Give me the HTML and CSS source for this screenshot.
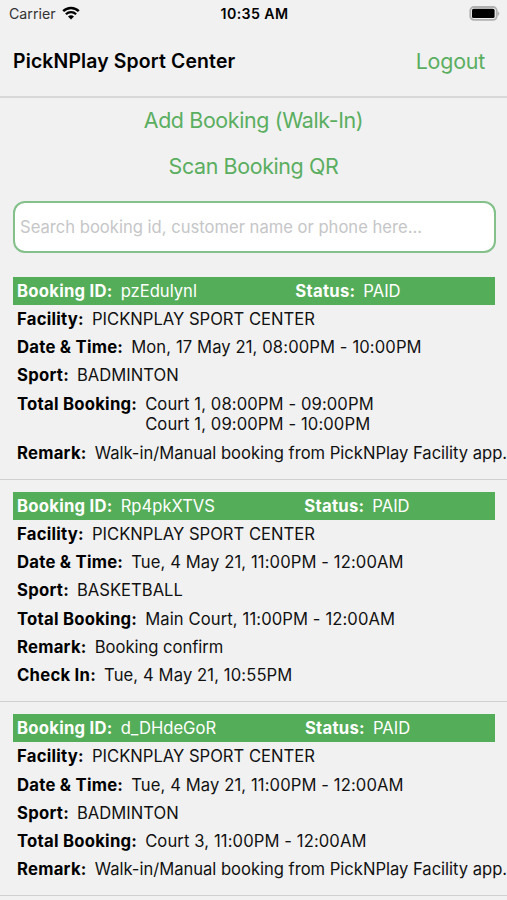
FILE: index.html
```
<!DOCTYPE html>
<html lang="en">

<head>
  <meta charset="UTF-8" />
  <meta name="viewport" content="width=device-width, initial-scale=1.0" />
  <title>PickNPlay Sport Center</title>
  <link rel="stylesheet" href="styles.css">
</head>

<body>

  <!-- Status bar -->
  <div class="status-bar">
    <div class="carrier">
      <span>Carrier</span>
      <svg class="wifi" viewBox="0 0 18 14" width="18" height="14">
        <path d="M1.2 5.1a11.2 11.2 0 0 1 15.6 0" fill="none" stroke="#000" stroke-width="2.5" />
        <path d="M3.9 8.2a7.3 7.3 0 0 1 10.2 0" fill="none" stroke="#000" stroke-width="2.3" />
        <path d="M9 13.6L6 10.6a4.3 4.3 0 0 1 6 0z" fill="#000" />
      </svg>
    </div>
    <div class="clock">10:35 AM</div>
    <svg class="battery" viewBox="0 0 31 15" width="31" height="15">
      <rect x="1.3" y="1" width="26.4" height="12.8" rx="3.6" fill="#f1f1f1" stroke="#b0b0b0" stroke-width="1.8" />
      <rect x="3" y="2.8" width="22.6" height="9.2" rx="1.6" fill="#000" />
      <path d="M28.6 5.2c2.3.9 2.3 3.7 0 4.6z" fill="#b0b0b0" />
    </svg>
  </div>

  <!-- Header -->
  <div class="header">
    <h1>PickNPlay Sport Center</h1>
    <a class="logout">Logout</a>
  </div>

  <div class="actions">
    <a class="add">Add Booking (Walk-In)</a>
    <a class="scan">Scan Booking QR</a>
  </div>

  <input class="search" type="text" placeholder="Search booking id, customer name or phone here...">

  <!-- Bookings -->
  <div class="booking">
    <div class="row booking-head">
      <div class="cell"><b>Booking ID:</b><span>pzEdulynl</span></div>
      <div class="cell"><b>Status:</b><span>PAID</span></div>
    </div>
    <div class="row"><b>Facility:</b><span>PICKNPLAY SPORT CENTER</span></div>
    <div class="row"><b>Date &amp; Time:</b><span class="time">Mon, 17 May 21, 08:00PM - 10:00PM</span></div>
    <div class="row"><b>Sport:</b><span>BADMINTON</span></div>
    <div class="row"><b>Total Booking:</b><span class="time">Court 1, 08:00PM - 09:00PM<br>Court 1, 09:00PM - 10:00PM</span></div>
    <div class="row"><b>Remark:</b><span class="remark">Walk-in/Manual booking from PickNPlay Facility app.</span></div>
  </div>

  <div class="booking">
    <div class="row booking-head">
      <div class="cell"><b>Booking ID:</b><span>Rp4pkXTVS</span></div>
      <div class="cell"><b>Status:</b><span>PAID</span></div>
    </div>
    <div class="row"><b>Facility:</b><span>PICKNPLAY SPORT CENTER</span></div>
    <div class="row"><b>Date &amp; Time:</b><span class="time">Tue, 4 May 21, 11:00PM - 12:00AM</span></div>
    <div class="row"><b>Sport:</b><span>BASKETBALL</span></div>
    <div class="row"><b>Total Booking:</b><span class="time">Main Court, 11:00PM - 12:00AM</span></div>
    <div class="row"><b>Remark:</b><span class="remark">Booking confirm</span></div>
    <div class="row"><b>Check In:</b><span class="time">Tue, 4 May 21, 10:55PM</span></div>
  </div>

  <div class="booking">
    <div class="row booking-head">
      <div class="cell"><b>Booking ID:</b><span>d_DHdeGoR</span></div>
      <div class="cell"><b>Status:</b><span>PAID</span></div>
    </div>
    <div class="row"><b>Facility:</b><span>PICKNPLAY SPORT CENTER</span></div>
    <div class="row"><b>Date &amp; Time:</b><span class="time">Tue, 4 May 21, 11:00PM - 12:00AM</span></div>
    <div class="row"><b>Sport:</b><span>BADMINTON</span></div>
    <div class="row"><b>Total Booking:</b><span class="time">Court 3, 11:00PM - 12:00AM</span></div>
    <div class="row"><b>Remark:</b><span class="remark">Walk-in/Manual booking from PickNPlay Facility app.</span></div>
  </div>

</body>

</html>
```

FILE: styles.css
```
* {
  margin: 0;
  padding: 0;
  box-sizing: border-box;
}

body {
  height: 900px;
  overflow: hidden;
  font-family: Inter, "Liberation Sans", sans-serif;
  font-size: 16.6px;
  line-height: 20.8px;
  color: #111;
  background-color: #f1f1f1;
}

.status-bar {
  display: grid;
  grid-template-columns: 1fr auto 1fr;
  align-items: center;
  height: 27px;
  padding: 0 7px 0 9px;
  font-size: 14.2px;
}

.carrier {
  display: flex;
  align-items: center;
  gap: 6px;
  color: #333;
}

.carrier span,
.clock {
  padding-top: 1px;
}

.clock {
  font-weight: 600;
  letter-spacing: 0.4px;
  color: #000;
}

.battery {
  justify-self: end;
}

.header {
  display: flex;
  justify-content: space-between;
  align-items: center;
  height: 71px;
  padding: 0 22px 0 13px;
  border-bottom: 2px solid #d8d8d8;
}

h1 {
  font-size: 19.4px;
  font-weight: 600;
  letter-spacing: 0.15px;
  color: #000;
}

.header a,
.actions a {
  font-size: 21.4px;
  letter-spacing: -0.36px;
  color: #5aae60;
}

.header .logout {
  letter-spacing: -0.2px;
}

.actions {
  display: flex;
  flex-direction: column;
  align-items: center;
  gap: 25px;
  padding-top: 12px;
}

.search {
  display: block;
  width: 483px;
  height: 52px;
  margin: 24px 0 12px 13px;
  padding: 1px 5px 0;
  font-family: inherit;
  font-size: 16.6px;
  background-color: #fff;
  border: 2px solid #83c08a;
  border-radius: 12px;
  outline: none;
}

.search::placeholder {
  color: #c6c6c8;
}

.booking {
  padding: 12.2px 12px 12.2px 13px;
  border-bottom: 1.5px solid #d0d0d0;
}

.row {
  display: flex;
  padding: 4.3px 0 3.04px;
  white-space: nowrap;
}

.row b {
  padding: 0 4px;
  font-size: 16.7px;
  font-weight: 700;
  letter-spacing: 0.25px;
  color: #000;
}

.row span {
  padding: 0 4px;
}

.row .time {
  letter-spacing: 0.11px;
}

.row .remark {
  letter-spacing: -0.02px;
}

.booking-head {
  background-color: #54ad58;
}

.booking-head b,
.booking-head span {
  color: #fff;
}

.cell {
  display: flex;
  flex: 1 1 auto;
}
```
